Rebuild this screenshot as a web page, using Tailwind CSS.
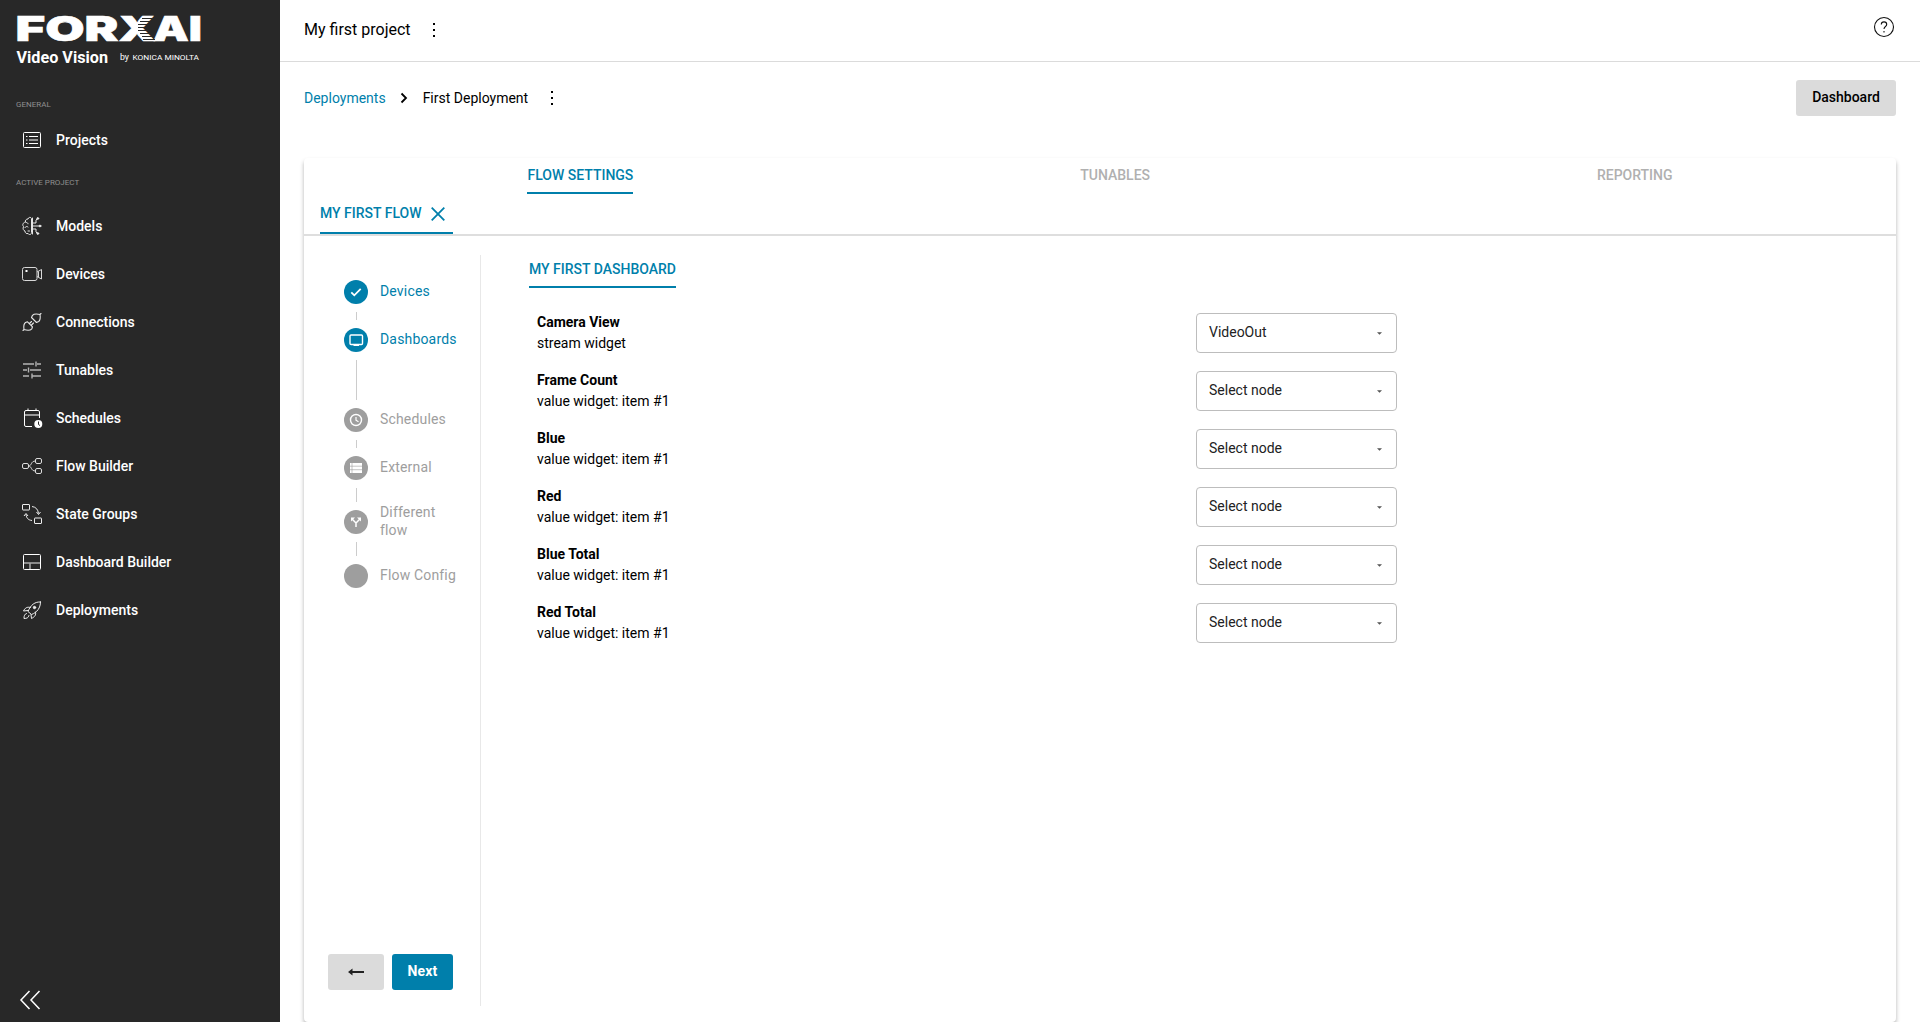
<!DOCTYPE html>
<html lang="en">
<head>
<meta charset="utf-8">
<title>FORXAI Video Vision</title>
<script src="https://cdn.jsdelivr.net/npm/@tailwindcss/browser@4"></script>
</head>
<body class="font-['Roboto',sans-serif] text-sm text-black bg-white">
<div class="flex h-[1022px] w-[1920px] overflow-hidden">
  <aside class="flex w-[280px] shrink-0 flex-col bg-[#282828] text-white">
    <svg class="block shrink-0" width="280" height="70" viewBox="0 0 280 70" fill="#fff">
      <g font-family="Inter, sans-serif" font-weight="900" font-size="34" stroke="#fff" stroke-width=".6">
        <text x="15.500" y="41.2" textLength="103" lengthAdjust="spacingAndGlyphs">FOR</text>
        <text x="118.500" y="41.2" textLength="37" lengthAdjust="spacingAndGlyphs">X</text>
        <text x="153" y="41.2" textLength="49" lengthAdjust="spacingAndGlyphs">AI</text>
      </g>
      <path d="M142 18.500h14M140 21.500h14M138 24.500h12M138 27.500h9M138 30.500h10M140 33.500h13M142 36.500h12M143 39.500h12" stroke="#282828" stroke-width="1.100"/>
      <text x="16.500" y="63" font-family="Roboto, sans-serif" font-weight="700" font-size="17" textLength="91.500" lengthAdjust="spacingAndGlyphs">Video Vision</text>
      <text x="120" y="60" font-family="Roboto, sans-serif" font-size="9" textLength="9" lengthAdjust="spacingAndGlyphs">by</text>
      <text x="132.500" y="60" font-family="Roboto, sans-serif" font-size="8" textLength="66.500" lengthAdjust="spacingAndGlyphs">KONICA MINOLTA</text>
    </svg>
    <div class="flex h-[46px] shrink-0 items-center pt-6 pl-4 text-[8px] text-[#8f8f8f]">GENERAL</div>
    <nav>
      <a class="flex h-12 items-center gap-3 pl-5 font-medium"><svg class="w-6" width="24" height="24" viewBox="0 0 24 24" fill="none" stroke="#fff"><rect x="3.500" y="4.500" width="17" height="15" rx="1"/><path d="M6 8.500h1.500M9 8.500h9M6 12h1.500M9 12h9M6 15.500h1.500M9 15.500h9"/></svg>Projects</a>
    </nav>
    <div class="flex h-[38px] shrink-0 items-center pl-4 text-[8px] text-[#8f8f8f]">ACTIVE PROJECT</div>
    <nav class="font-medium">
      <a class="flex h-12 items-center gap-3 pl-5"><svg width="24" height="24" viewBox="0 0 24 24" fill="none" stroke="#e6e6e6" stroke-linecap="round" stroke-linejoin="round"><path d="M11.500 4.500c0-1.500-3-1.800-3.500.5-2 0-3 1.500-2.500 3C3 8.500 2 11 3.500 12.500 2.500 15 3.500 16.500 5 17c0 2 1.500 3 3 2.500.8 1.500 3.500 1.500 3.500-.5zM6 8.500c1 0 2 .2 2 1.300M5 13.500c.5-1 2-1.500 3-.5M8 17h1.500"/><path d="M12.500 4v16M13 9h3V6l1.500-1.500M13 12h7M13 15h3v3l1.500 1.500"/><g fill="#e6e6e6"><circle cx="17.800" cy="4.500" r=".9"/><circle cx="20" cy="12" r=".9"/><circle cx="17.800" cy="19.500" r=".9"/></g></svg>Models</a>
      <a class="flex h-12 items-center gap-3 pl-5"><svg width="24" height="24" viewBox="0 0 24 24" fill="none" stroke="#d8d8d8"><rect x="2.500" y="5.500" width="14.500" height="13" rx="2"/><path d="M17 10l4.500-2.500v9.500L17 14.500M18.500 9.500v5.500"/><path d="M5.500 9h2" stroke-width="2" stroke="#fff"/></svg>Devices</a>
      <a class="flex h-12 items-center gap-3 pl-5"><svg width="24" height="24" viewBox="0 0 24 24" fill="none" stroke="#e6e6e6" stroke-width="1.100" stroke-linecap="round" stroke-linejoin="round"><path d="M3 20.500l1-1M4 19.500c-.5-3-.5-5.500 1.500-7l2-.7 5 5-.7 2c-1.800 2-4.500 1.700-7.800.7zM21 3.500l-1 1M20 4.500c-3.500-.8-6-.8-7.500.8l-1 2.200 5 5 2.200-1c1.700-1.500 1.800-4 1.300-7zM9.500 13.500l2-2M11.500 15l2-2"/></svg>Connections</a>
      <a class="flex h-12 items-center gap-3 pl-5"><svg width="24" height="24" viewBox="0 0 24 24" fill="none" stroke="#b4b4b4" stroke-width="1.400"><path d="M3 6h11M17 6h4M16 3.500v5M3 12h4M10 12h11M8.500 9.500v5M3 18h6M12 18h9M12 15.500v5"/></svg>Tunables</a>
      <a class="flex h-12 items-center gap-3 pl-5"><svg width="24" height="24" viewBox="0 0 24 24" fill="none" stroke="#fff"><path d="M12 20.500H6A1.500 1.500 0 0 1 4.500 19V6A1.500 1.500 0 0 1 6 4.500h12A1.500 1.500 0 0 1 19.500 6v6M8 2.500v2M16 2.500v2"/><path d="M5 9h14" stroke="#999" stroke-width="2"/><circle cx="18.300" cy="18" r="4" fill="#fff" stroke="none"/><path d="M18.500 15.500V18.500l1.500 1" stroke="#282828"/></svg>Schedules</a>
      <a class="flex h-12 items-center gap-3 pl-5"><svg width="24" height="24" viewBox="0 0 24 24" fill="none" stroke="#dcdcdc"><rect x="2.500" y="9.500" width="6" height="5" rx="1.500"/><rect x="15.500" y="4.500" width="6" height="5" rx="1.500"/><rect x="15.500" y="14.500" width="6" height="5" rx="1.500"/><path d="M8.500 12c3.500 0 2-5 7-5M8.500 12c3.500 0 2 5 7 5"/></svg>Flow Builder</a>
      <a class="flex h-12 items-center gap-3 pl-5"><svg width="24" height="24" viewBox="0 0 24 24" fill="none" stroke="#eee"><rect x="2.500" y="2.500" width="7" height="5.500" rx=".5"/><rect x="14.500" y="16" width="7" height="5.500" rx=".5"/><path d="M12 4.500c4 .5 6 3 6.500 7M16.500 10l2 2.500 2-2.500M12 18.500c-4-.5-5.500-2.500-6-6M4 14l2-2.500L8 14"/></svg>State Groups</a>
      <a class="flex h-12 items-center gap-3 pl-5"><svg width="24" height="24" viewBox="0 0 24 24" fill="none" stroke="#fff"><rect x="3.500" y="4.500" width="17" height="15" rx="1"/><path d="M4 13h16M10 13v6" stroke="#aaa" stroke-width="1.500"/></svg>Dashboard Builder</a>
      <a class="flex h-12 items-center gap-3 pl-5"><svg width="24" height="24" viewBox="0 0 24 24" fill="none" stroke="#eee" stroke-linecap="round" stroke-linejoin="round"><path d="M20.500 4C15 3.500 10.500 7 8 13.500l3.500 3C17 14.500 20.500 10 20.500 4zM10.500 9.500C7 8.500 5 10 3.500 13L8 12.500M15.500 14c1 3-1 5-4 6.500l-.5-4M6.500 15.500c-2 .5-2.500 2.500-2.500 5 2.500 0 4.500-.5 5-3"/><circle cx="14.500" cy="9.500" r="1.200" fill="#eee"/></svg>Deployments</a>
    </nav>
    <div class="mt-auto flex h-[46px] items-center pt-0.5 pl-[18px]"><svg width="24" height="24" viewBox="0 0 24 24" fill="none" stroke="#fff" stroke-width="1.500"><path d="M11.500 3 3 12l8.500 9M21.500 3 13 12l8.500 9"/></svg></div>
  </aside>

  <main class="flex min-w-0 grow flex-col">
    <header class="flex h-[62px] shrink-0 items-center border-b border-[#dbdbdb] px-6 text-base">
      <span class="pb-0.5 leading-6">My first project</span>
      <svg class="mb-px ml-[18px]" width="10" height="20" viewBox="0 0 10 20"><path d="M4 3h2v2H4zM4 9h2v2H4zM4 15h2v2H4z"/></svg>
      <svg class="mr-px mb-[7px] ml-auto" width="22" height="22" viewBox="0 0 22 22" fill="none" stroke="#111" stroke-width="1.100"><circle cx="11" cy="11" r="9.500"/><path d="M8.300 8.500c0-3.500 5.400-3.500 5.400 0 0 2-2.700 2-2.700 4.500M11 15v1.500"/></svg>
    </header>
    <div class="flex h-[96px] shrink-0 items-center px-6 pb-6">
      <span class="text-[#007fab]">Deployments</span>
      <svg class="ml-[11px]" width="14" height="14" viewBox="0 0 14 14" fill="none" stroke="#000" stroke-width="1.800"><path d="M4.500 2.500 9 7l-4.500 4.500"/></svg>
      <span class="ml-3">First Deployment</span>
      <svg class="ml-[19px]" width="10" height="20" viewBox="0 0 10 20"><path d="M4 3h2v2H4zM4 9h2v2H4zM4 15h2v2H4z"/></svg>
      <button class="ml-auto h-9 w-[100px] rounded-[3px] bg-[#dbdbdb] pb-0.5 font-medium">Dashboard</button>
    </div>

    <section class="mx-6 flex h-[864px] flex-col rounded shadow-[0_3px_4px_rgba(0,0,0,0.3)]">
      <div class="flex h-9 items-stretch justify-around font-medium text-[#b0b0b0]">
        <div class="border-b-2 border-[#007fab] pt-[7px] leading-5 text-[#007fab]">FLOW SETTINGS</div>
        <div class="pt-[7px] leading-5">TUNABLES</div>
        <div class="pt-[7px] leading-5">REPORTING</div>
      </div>
      <div class="flex h-[42px] items-stretch border-b-2 border-[#dedede] px-4">
        <div class="flex w-[133px] items-center border-b-2 border-[#007fab] font-medium whitespace-nowrap text-[#007fab]">MY FIRST FLOW
          <svg class="mt-0.5 ml-[9px]" width="14" height="14" viewBox="0 0 14 14" fill="none" stroke="#007fab" stroke-width="1.800"><path d="m.7.7 12.600 12.600M13.300.7.7 13.300"/></svg>
        </div>
      </div>
      <div class="flex grow">
        <div class="mt-[19px] mb-4 flex w-[177px] shrink-0 flex-col border-r border-[#e8e8e8] pt-[17px] tracking-[0.012em]">
          <div class="flex h-10 items-center gap-3 pl-10 text-[#007fab]"><svg width="24" height="24" viewBox="0 0 24 24"><circle cx="12" cy="12" r="12" fill="#007fab"/><path d="m7.300 12.300 3 3 6.400-6.400" fill="none" stroke="#fff" stroke-width="1.800"/></svg><span class="pb-0.5">Devices</span></div>
          <div class="ml-[52px] h-2 w-px bg-[#ccc]"></div>
          <div class="flex h-10 items-center gap-3 pl-10 text-[#007fab]"><svg width="24" height="24" viewBox="0 0 24 24"><circle cx="12" cy="12" r="12" fill="#007fab"/><rect x="6" y="7" width="12.500" height="9.500" rx="1" fill="none" stroke="#fff" stroke-width="1.400"/><path d="M9.500 16.500h5.500V18H9.500z" fill="#fff"/></svg><span class="pb-0.5">Dashboards</span></div>
          <div class="ml-[52px] h-10 w-px bg-[#ccc]"></div>
          <div class="flex h-10 items-center gap-3 pl-10 text-[#9e9e9e]"><svg width="24" height="24" viewBox="0 0 24 24"><circle cx="12" cy="12" r="12" fill="#9e9e9e"/><circle cx="12" cy="12" r="5.500" fill="none" stroke="#fff" stroke-width="1.400"/><path d="M12 9v3.200l2.500 1.500" fill="none" stroke="#fff" stroke-width="1.200"/></svg><span class="pb-0.5">Schedules</span></div>
          <div class="ml-[52px] h-2 w-px bg-[#ccc]"></div>
          <div class="flex h-10 items-center gap-3 pl-10 text-[#9e9e9e]"><svg width="24" height="24" viewBox="0 0 24 24"><circle cx="12" cy="12" r="12" fill="#9e9e9e"/><path d="M6 7h12v10H6z" fill="#fff"/><path d="M6 10.200h12M6 13.700h12M8 7v10" stroke="#9e9e9e" stroke-width=".6"/></svg><span class="pb-0.5">External</span></div>
          <div class="ml-[52px] h-3.5 w-px bg-[#ccc]"></div>
          <div class="flex h-10 items-center gap-3 pl-10 leading-[18px] text-[#9e9e9e]"><svg class="shrink-0" width="24" height="24" viewBox="0 0 24 24"><circle cx="12" cy="12" r="12" fill="#9e9e9e"/><path d="M12 17v-4L8.300 9.300M12 13l3.700-3.700" fill="none" stroke="#fff" stroke-width="1.500"/><path d="M7 7.500h4L7 11.500zM17 7.500h-4l4 4z" fill="#fff"/></svg><span class="w-16 pb-0.5">Different flow</span></div>
          <div class="ml-[52px] h-3.5 w-px bg-[#ccc]"></div>
          <div class="flex h-10 items-center gap-3 pl-10 text-[#9e9e9e]"><svg width="24" height="24" viewBox="0 0 24 24"><circle cx="12" cy="12" r="12" fill="#9e9e9e"/></svg><span class="pb-0.5">Flow Config</span></div>
          <div class="mt-auto mb-4 flex gap-2 pl-6">
            <button class="flex h-9 w-14 items-center justify-center rounded-[3px] bg-[#dbdbdb]"><svg width="16" height="8" viewBox="0 0 16 8"><path d="M4.500.5V3H16v2H4.500v2.500L0 4z" fill="#222"/></svg></button>
            <button class="h-9 w-[61px] rounded-[3px] bg-[#007fab] pb-0.5 font-bold text-white">Next</button>
          </div>
        </div>
        <div class="flex grow flex-col items-start pt-[19px] pl-12">
          <div class="h-[33px] border-b-2 border-[#007fab] pt-1 font-medium leading-5 text-[#007fab]">MY FIRST DASHBOARD</div>
          <div class="mt-[25px] grid grid-cols-[659px_201px] gap-y-[18px] pl-2" id="widgets"></div>
        </div>
      </div>
    </section>
  </main>
</div>
<template id="row">
  <div class="-mt-px h-10 leading-[21px]"><div class="font-bold">&nbsp;</div><div></div></div>
  <div class="flex h-10 items-center justify-between rounded border border-[#bdbdbd] pr-[14px] pl-3 text-[#222]"><span class="mb-0.5"></span><svg width="5" height="3" viewBox="0 0 6 3"><path d="M0 0h6L3 3z" fill="#555"/></svg></div>
</template>
<script>
const rows = [
  ['Camera View', 'stream widget', 'VideoOut'],
  ['Frame Count', 'value widget: item #1', 'Select node'],
  ['Blue', 'value widget: item #1', 'Select node'],
  ['Red', 'value widget: item #1', 'Select node'],
  ['Blue Total', 'value widget: item #1', 'Select node'],
  ['Red Total', 'value widget: item #1', 'Select node'],
];
const list = document.getElementById('widgets');
for (const [title, sub, value] of rows) {
  const row = document.getElementById('row').content.cloneNode(true);
  const [label, select] = row.children;
  label.children[0].textContent = title;
  label.children[1].textContent = sub;
  select.firstElementChild.textContent = value;
  list.append(row);
}
</script>
</body>
</html>
